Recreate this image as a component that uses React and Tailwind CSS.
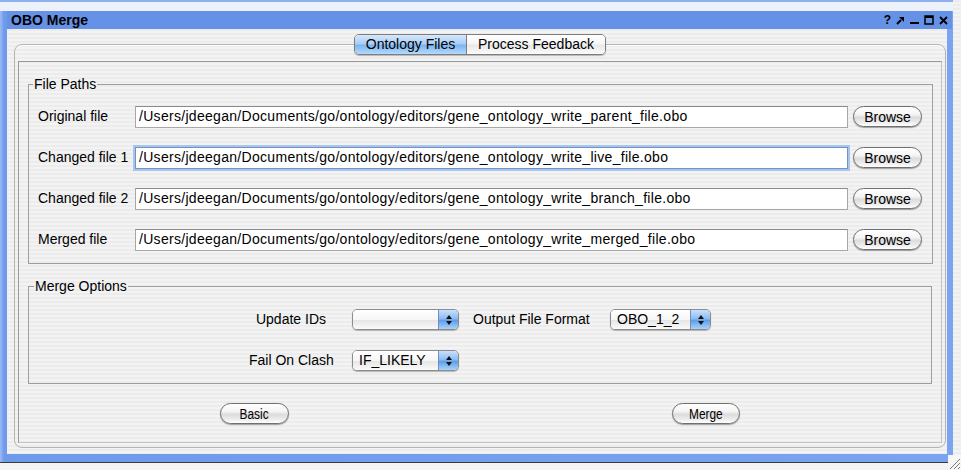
const stripes =
  "bg-[repeating-linear-gradient(180deg,#ececec_0px,#ececec_2px,#f3f3f3_2px,#f3f3f3_4px)]";

const paths = [
  { label: "Original file", value: "/Users/jdeegan/Documents/go/ontology/editors/gene_ontology_write_parent_file.obo" },
  { label: "Changed file 1", value: "/Users/jdeegan/Documents/go/ontology/editors/gene_ontology_write_live_file.obo", focused: true },
  { label: "Changed file 2", value: "/Users/jdeegan/Documents/go/ontology/editors/gene_ontology_write_branch_file.obo" },
  { label: "Merged file", value: "/Users/jdeegan/Documents/go/ontology/editors/gene_ontology_write_merged_file.obo" },
];

const AquaButton = ({ children, className = "" }) => (
  <button
    className={`h-[21px] rounded-full border border-[#6f6f6f] bg-[linear-gradient(180deg,#ffffff_0%,#f4f4f4_40%,#dcdcdc_55%,#ececec_80%,#ffffff_100%)] shadow-[0_1px_1px_rgba(0,0,0,0.35)] text-[14px] leading-none text-black ${className}`}
  >
    {children}
  </button>
);

const PopUp = ({ value, width }) => (
  <div
    className={`flex h-[21px] overflow-hidden rounded-[5px] border border-[#8c8c8c] shadow-[0_1px_1px_rgba(0,0,0,0.25)] ${width}`}
  >
    <div className="flex flex-1 items-center bg-[linear-gradient(180deg,#ffffff_0%,#f6f6f6_50%,#e6e6e6_55%,#fafafa_100%)] pl-[6px] text-[14px] text-black">
      {value}
    </div>
    <div className="flex w-[20px] flex-col items-center justify-center gap-[2px] border-l border-[#6d8fc4] bg-[linear-gradient(180deg,#c9e0fb_0%,#8dbcf2_45%,#5f9ee8_55%,#a9d3fb_100%)]">
      <svg width="6" height="4" viewBox="0 0 6 4">
        <path d="M3 0 L6 4 L0 4 Z" fill="#111" />
      </svg>
      <svg width="6" height="4" viewBox="0 0 6 4">
        <path d="M0 0 L6 0 L3 4 Z" fill="#111" />
      </svg>
    </div>
  </div>
);

const TitleIcons = () => (
  <div className="flex items-center gap-[5px] pr-[4px]">
    <span className="text-[12px] font-bold leading-none text-black">?</span>
    <svg width="9" height="9" viewBox="0 0 9 9">
      <path d="M1 8 L5 4" stroke="#000" strokeWidth="2" />
      <path d="M3 1 H8 V6 Z" fill="#000" />
    </svg>
    <svg width="9" height="9" viewBox="0 0 9 9">
      <rect x="0" y="6" width="9" height="2" fill="#000" />
    </svg>
    <svg width="10" height="10" viewBox="0 0 10 10">
      <rect x="1" y="1" width="8" height="8" fill="none" stroke="#000" strokeWidth="1.5" />
      <rect x="1" y="1" width="8" height="2" fill="#000" />
    </svg>
    <svg width="9" height="9" viewBox="0 0 9 9">
      <path d="M1 1 L8 8 M8 1 L1 8" stroke="#000" strokeWidth="1.8" />
    </svg>
  </div>
);

export default function App() {
  return (
    <div className="relative flex h-[470px] w-[961px] flex-col overflow-hidden bg-[#e6e6e6] font-['Liberation_Sans',Arial,sans-serif] text-black">
      <div className="flex flex-1">
        <div className="flex w-[953px] flex-col">
          <div className="h-[11px] border-t-2 border-[#8fb0ef] bg-[#edf1fa]" />
          <div className="flex flex-1 flex-col bg-[linear-gradient(90deg,#9dbcf4_0px,#6e9aec_4px,#7aa4ef_100%)] pl-[7px] pr-[6px] pb-[8px]">
            <div className="-mr-[5px] flex h-[18px] items-center justify-between bg-[#6592e6] pl-[4px]">
              <span className="text-[14px] font-bold leading-none">OBO Merge</span>
              <TitleIcons />
            </div>
            <div className={`flex flex-1 flex-col pl-[7px] pr-[1px] pt-[5px] ${stripes}`}>
              <div className="relative z-10 flex justify-center">
                <div className="flex h-[21px] overflow-hidden rounded-[5px] border border-[#7d7d7d] text-[14px] shadow-[0_1px_1px_rgba(0,0,0,0.25)]">
                  <div className="flex w-[112px] items-center justify-center border-r border-[#7d7d7d] bg-[linear-gradient(180deg,#d6e8fc_0%,#a9cff7_45%,#7eb5f0_55%,#b4dafb_100%)]">
                    Ontology Files
                  </div>
                  <div className="flex w-[138px] items-center justify-center bg-[linear-gradient(180deg,#ffffff_0%,#f6f6f6_45%,#e8e8e8_55%,#fbfbfb_100%)]">
                    Process Feedback
                  </div>
                </div>
              </div>
              <div className="-mt-[11px] flex w-[932px] flex-1 flex-col rounded-[8px] border border-[#b4b4b4] px-[3px] pb-[4px] pt-[16px] shadow-[inset_0_1px_0_#ffffff]">
                <div className="flex flex-1 flex-col border border-[#9a9a9a] border-b-[#c4c4c4] border-r-[#c4c4c4] px-[9px]">
                  <fieldset className="mt-[14px] border border-[#9e9e9e] pb-[3px] pl-[9px] pr-[10px] pt-[4px]">
                    <legend className="-ml-[5px] px-[1px] text-[14px] leading-[16px]">File Paths</legend>
                    {paths.map((p) => (
                      <div key={p.label} className="flex h-[41px] items-center">
                        <span className="w-[97px] text-[14px]">{p.label}</span>
                        <div
                          className={`flex h-[22px] w-[713px] items-center bg-white px-[3px] text-[14px] tracking-[0.3px] ${
                            p.focused
                              ? "border border-[#6f93c8] shadow-[0_0_0_2px_#a9c6ea]"
                              : "border border-[#a8a8a8] border-t-[#8a8a8a]"
                          }`}
                        >
                          {p.value}
                        </div>
                        <AquaButton className="ml-[5px] w-[69px]">Browse</AquaButton>
                      </div>
                    ))}
                  </fieldset>

                  <fieldset className="mt-[14px] border border-[#9e9e9e] pb-[2px] pt-[5px]">
                    <legend className="ml-[5px] px-[1px] text-[14px] leading-[16px]">Merge Options</legend>
                    <div className="flex justify-center">
                      <div className="grid grid-cols-[84px_126px_151px_101px] grid-rows-[41px_41px] items-center">
                        <span className="whitespace-nowrap text-center text-[14px]">Update IDs</span>
                        <div className="ml-[19px] w-[107px]">
                          <PopUp value="" width="w-[107px]" />
                        </div>
                        <span className="ml-[14px] whitespace-nowrap text-[14px]">Output File Format</span>
                        <PopUp value="OBO_1_2" width="w-[101px]" />
                        <span className="whitespace-nowrap text-center text-[14px]">Fail On Clash</span>
                        <div className="ml-[19px] w-[107px]">
                          <PopUp value="IF_LIKELY" width="w-[107px]" />
                        </div>
                      </div>
                    </div>
                  </fieldset>

                  <div className="mt-[19px] grid grid-cols-2">
                    <div className="flex justify-center">
                      <AquaButton className="w-[69px]">
                        <span className="inline-block scale-x-85">Basic</span>
                      </AquaButton>
                    </div>
                    <div className="flex justify-center">
                      <AquaButton className="w-[68px]">
                        <span className="inline-block scale-x-85">Merge</span>
                      </AquaButton>
                    </div>
                  </div>
                </div>
              </div>
              <div className="h-[6px]" />
            </div>
          </div>
        </div>
        <div className={`w-[8px] ${stripes}`} />
      </div>
      <div className="h-[8px] border-t border-[#3a3a3a] bg-[#f4f4f4]" />
      <svg
        className="absolute bottom-0 right-0"
        width="13"
        height="15"
        viewBox="0 0 13 15"
      >
        <rect width="13" height="15" fill="#f6f6f6" />
        <path d="M2 14 L12 4 M6 14 L12 8 M10 14 L12 12" stroke="#7a7a7a" strokeWidth="1" />
      </svg>
    </div>
  );
}
